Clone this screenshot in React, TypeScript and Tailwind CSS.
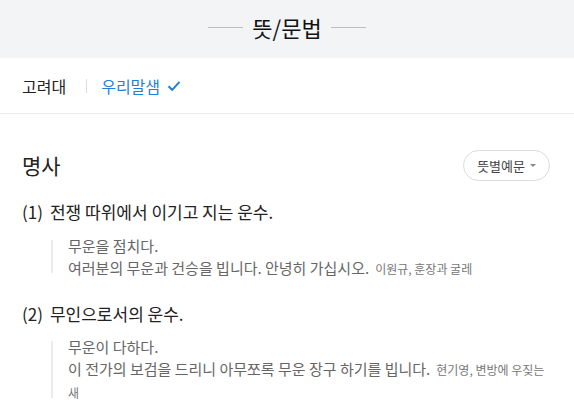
export default function App() {
  const font = { fontFamily: '"Noto Sans CJK KR", "Noto Sans", sans-serif' };

  return (
    <div className="w-[574px] min-h-[415px] bg-white text-[#222]" style={font}>
      {/* title bar */}
      <div className="h-[58px] bg-[#f3f4f6] flex items-center justify-center gap-[9px] pb-[4px]">
        <span className="w-[35px] h-px bg-[#bdbdbd]" />
        <h1 className="text-[22px] leading-none text-[#111]">뜻/문법</h1>
        <span className="w-[35px] h-px bg-[#bdbdbd]" />
      </div>

      {/* dictionary tabs */}
      <div className="h-[56px] flex items-center px-[22px] border-b border-[#ebebeb]">
        <span className="text-[16px]">고려대</span>
        <span className="w-px h-[14px] bg-[#dcdcdc] ml-[20px] mr-[14px]" />
        <span className="text-[16px] text-[#1f7fe0] flex items-center gap-[7px]">
          우리말샘
          <svg width="14" height="12" viewBox="0 0 14 12" fill="none">
            <path d="M1.5 6.2 L5.2 9.8 L12.5 1.8" stroke="#1f7fe0" strokeWidth="2" />
          </svg>
        </span>
      </div>

      {/* body */}
      <div className="pl-[22px] pr-[28px] pt-[36px]">
        <div className="flex items-center justify-between">
          <h2 className="text-[21px] leading-none">명사</h2>
          <button className="h-[31px] px-[13px] -mr-[4px] rounded-full border border-[#dcdcdc] text-[13px] text-[#444] flex items-center gap-[5px]">
            뜻별예문
            <span className="w-0 h-0 border-l-[3px] border-r-[3px] border-t-[3px] border-l-transparent border-r-transparent border-t-[#888]" />
          </button>
        </div>

        <p className="mt-[19px] text-[17px] leading-[24px]">
          (1)<span className="ml-[7px]">전쟁 따위에서 이기고 지는 운수.</span>
        </p>
        <div className="mt-[11px] ml-[29px] flex">
          <span className="w-[2px] shrink-0 bg-[#ebebeb] mt-[5px] mb-[7px]" />
          <div className="pl-[15px] text-[15px] leading-[22px] text-[#666]">
            <p>무운을 점치다.</p>
            <p>
              여러분의 무운과 건승을 빕니다. 안녕히 가십시오.
              <span className="ml-[6px] text-[12px] text-[#777]">이원규, 훈장과 굴레</span>
            </p>
          </div>
        </div>

        <p className="mt-[22px] text-[17px] leading-[24px]">
          (2)<span className="ml-[7px]">무인으로서의 운수.</span>
        </p>
        <div className="mt-[10px] ml-[29px] flex">
          <span className="w-[2px] shrink-0 bg-[#ebebeb] mt-[5px] mb-[6px]" />
          <div className="pl-[15px] text-[15px] leading-[22px] text-[#666]">
            <p>무운이 다하다.</p>
            <p>
              이 전가의 보검을 드리니 아무쪼록 무운 장구 하기를 빕니다.
              <span className="ml-[6px] text-[12px] text-[#777]">현기영, 변방에 우짖는 새</span>
            </p>
          </div>
        </div>
      </div>
    </div>
  );
}
